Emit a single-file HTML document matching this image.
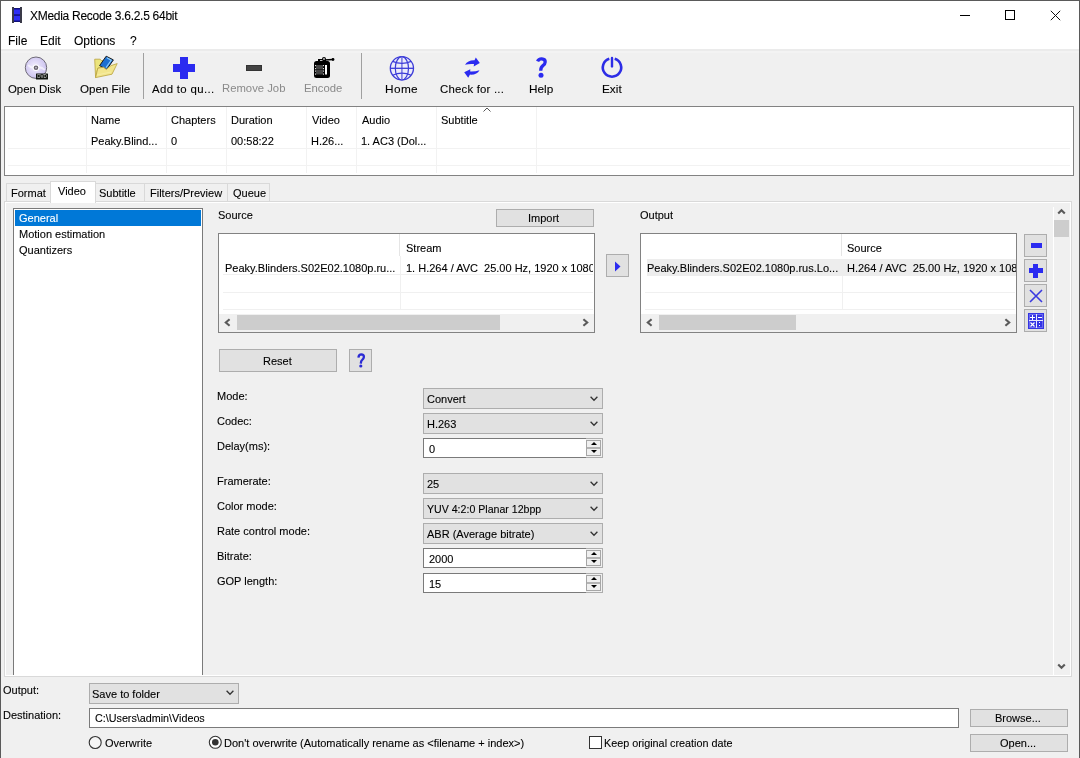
<!DOCTYPE html>
<html><head><meta charset="utf-8">
<style>
*{box-sizing:border-box}
html,body{margin:0;padding:0}
body{width:1080px;height:758px;overflow:hidden;position:relative;will-change:transform;background:#f0f0f0;font-family:"Liberation Sans",sans-serif;font-size:11px;color:#000}
.a{position:absolute}
.t{position:absolute;white-space:nowrap;line-height:13px;font-size:11px;-webkit-text-stroke:0.1px currentColor}
.btn{position:absolute;background:#e1e1e1;border:1px solid #adadad}
.cmb{position:absolute;background:#e1e1e1;border:1px solid #adadad}
.inp{position:absolute;background:#fff;border:1px solid #7a7a7a}
.g{color:#8d8d8d}
.hl{position:absolute;height:1px;background:#f0f0f0}
.vl{position:absolute;width:1px;background:#f0f0f0}
</style></head><body>

<!-- title + menu white area -->
<div class="a" style="left:0;top:0;width:1080px;height:49px;background:#fff"></div>
<!-- window borders -->
<div class="a" style="left:0;top:0;width:1080px;height:1px;background:#5a5a5a"></div>
<div class="a" style="left:0;top:0;width:1px;height:758px;background:#5a5a5a"></div>
<div class="a" style="left:1079px;top:0;width:1px;height:758px;background:#5a5a5a"></div>

<!-- app icon -->
<svg class="a" style="left:12px;top:7px" width="10" height="16" viewBox="0 0 10 16">
<rect x="0" y="0" width="2" height="16" fill="#3a3a48"/>
<rect x="8" y="0" width="2" height="16" fill="#3a3a48"/>
<rect x="2" y="1" width="6" height="14" fill="#2f2ff5"/>
<rect x="2" y="1" width="6" height="1.5" fill="#10107a"/>
<rect x="2" y="7.3" width="6" height="1.5" fill="#10107a"/>
<rect x="2" y="13.5" width="6" height="1.5" fill="#10107a"/>
</svg>
<div class="t" style="left:30px;top:10px;font-size:12px;letter-spacing:-0.28px">XMedia Recode 3.6.2.5 64bit</div>

<!-- window controls -->
<div class="a" style="left:960px;top:15px;width:10px;height:1px;background:#000"></div>
<div class="a" style="left:1005px;top:10px;width:10px;height:10px;border:1px solid #000"></div>
<svg class="a" style="left:1050px;top:10px" width="11" height="11" viewBox="0 0 11 11"><path d="M0.8 0.8L10.2 10.2M10.2 0.8L0.8 10.2" stroke="#111" stroke-width="1"/></svg>

<!-- menu -->
<div class="t" style="left:8px;top:35px;font-size:12px">File</div>
<div class="t" style="left:40px;top:35px;font-size:12px">Edit</div>
<div class="t" style="left:74px;top:35px;font-size:12px">Options</div>
<div class="t" style="left:130px;top:35px;font-size:12px">?</div>


<!-- toolbar -->
<div class="a" style="left:1px;top:49px;width:1078px;height:2px;background:#ebebeb"></div>
<div class="a" style="left:1px;top:51px;width:1078px;height:2px;background:#f3f3f3"></div>
<!-- disc -->
<svg class="a" style="left:24px;top:55px" width="25" height="26" viewBox="0 0 25 26">
<defs><radialGradient id="dg" cx="0.45" cy="0.45" r="0.6"><stop offset="0" stop-color="#f4f0ff"/><stop offset="0.5" stop-color="#ddd6f6"/><stop offset="1" stop-color="#c9c0ee"/></radialGradient></defs>
<circle cx="12" cy="12.7" r="10.7" fill="url(#dg)" stroke="#6e6a76" stroke-width="1"/>
<path d="M4 10 Q8 14 12 12.7 Q17 11 21 15" stroke="#fff" stroke-width="2" fill="none" opacity="0.6"/>
<circle cx="12" cy="12.7" r="3.2" fill="#fff"/>
<circle cx="12" cy="12.7" r="2.3" fill="#6a6470"/><circle cx="12" cy="12.7" r="0.9" fill="#c8c4d0"/>
<rect x="12" y="18.6" width="12" height="6" rx="0.5" fill="#101510"/>
<text x="13.3" y="23.4" font-family="Liberation Sans" font-size="5" fill="#dcdcdc" textLength="9.5" lengthAdjust="spacingAndGlyphs">DVD</text>
</svg>
<!-- folder -->
<svg class="a" style="left:94px;top:55px" width="24" height="24" viewBox="0 0 24 24">
<path d="M0.7 4.2 L6.2 4.2 L7.4 5.6 L13 5.6 L13 12 L3.8 13.2 L1.6 22.6 Z" fill="#ebe47c" stroke="#b9a23e" stroke-width="0.8"/>
<path d="M5.6 10.6 L12.2 1.2 L19.4 4.9 L12.6 14.6 Z" fill="#1c6fd0" stroke="#1a1a1a" stroke-width="1"/>
<path d="M12.8 2.8 L17.2 5.2 L12 12.6" stroke="#8fd0fa" stroke-width="1.1" fill="none"/>
<path d="M1.6 22.6 L18 19.2 L23.2 8.6 L17 10.6 L12.2 14.4 L9.6 12.2 L3.8 13.2 Z" fill="#f2e58c" stroke="#b9a23e" stroke-width="0.8"/>
<path d="M3 20 L17 17" stroke="#f8f0b0" stroke-width="1" opacity="0.6"/>
</svg>
<div class="a" style="left:143px;top:53px;width:1px;height:46px;background:#a0a0a0"></div>
<!-- plus -->
<div class="a" style="left:180px;top:57px;width:8px;height:22px;background:#2b2bf0"></div>
<div class="a" style="left:173px;top:64px;width:22px;height:8px;background:#2b2bf0"></div>
<!-- minus -->
<div class="a" style="left:246px;top:65px;width:16px;height:6px;background:#434343;border:1px solid #333"></div>
<!-- encode -->
<svg class="a" style="left:313px;top:56px" width="22" height="23" viewBox="0 0 22 23">
<rect x="1" y="5" width="16" height="17" rx="2.5" fill="#000"/>
<rect x="5" y="3" width="8" height="4" fill="#000"/>
<path d="M11 4 L20 3.5" stroke="#000" stroke-width="1.6"/>
<circle cx="20" cy="3.5" r="1.4" fill="#000"/>
<circle cx="11" cy="3" r="2" fill="#000"/><circle cx="11" cy="3" r="0.9" fill="#ccc"/>
<rect x="7" y="4" width="2.5" height="1" fill="#bbb"/>
<rect x="3" y="9" width="7" height="4.5" fill="#444"/>
<rect x="3" y="14" width="7" height="4.5" fill="#444"/>
<rect x="2" y="9" width="1" height="1.2" fill="#ddd"/><rect x="2" y="12" width="1" height="1.2" fill="#ddd"/><rect x="2" y="14.5" width="1" height="1.2" fill="#ddd"/><rect x="2" y="17.5" width="1" height="1.2" fill="#ddd"/>
<rect x="10" y="9" width="1" height="1.2" fill="#ddd"/><rect x="10" y="12" width="1" height="1.2" fill="#ddd"/><rect x="10" y="14.5" width="1" height="1.2" fill="#ddd"/><rect x="10" y="17.5" width="1" height="1.2" fill="#ddd"/>
<rect x="12" y="9" width="2" height="9.5" fill="#fff"/>
</svg>
<div class="a" style="left:361px;top:53px;width:1px;height:46px;background:#a0a0a0"></div>
<!-- globe -->
<svg class="a" style="left:388px;top:54px" width="28" height="28" viewBox="0 0 28 28">
<g stroke="#3c3cd8" fill="none">
<circle cx="13.9" cy="14.3" r="11.6" fill="#ececfb" stroke-width="1.3"/>
<ellipse cx="13.9" cy="14.3" rx="6.6" ry="11.6" stroke-width="1.2"/>
<line x1="13.9" y1="2.7" x2="13.9" y2="25.9" stroke="#6e6ee0" stroke-width="1.4"/>
<line x1="2.3" y1="14.3" x2="25.5" y2="14.3" stroke-width="1.3"/>
<path d="M4.6 7.4 Q13.9 11.4 23.2 7.4" stroke-width="1.2"/>
<path d="M4.6 21.2 Q13.9 17.2 23.2 21.2" stroke-width="1.2"/>
</g>
</svg>
<!-- refresh -->
<svg class="a" style="left:460px;top:54px" width="24" height="26" viewBox="0 0 24 26">
<path d="M5 10.8 Q8 6 14.5 6.3 L15.8 3.6 L19.8 9.1 L13.7 12.4 L14 10 Q9 9.6 5 10.8 Z" fill="#2b2bf0"/>
<path d="M19.5 16.2 Q17 21 10 20.6 L8.2 23.8 L4.2 18.2 L10.3 15.2 L10.2 17.6 Q15.5 17.8 19.5 16.2 Z" fill="#2b2bf0"/>
</svg>
<!-- help ? -->
<svg class="a" style="left:530px;top:54px" width="22" height="26" viewBox="0 0 22 26">
<path d="M7.6 7.4 Q8.6 4.8 11.8 4.9 Q15.3 5.1 15.2 8 Q15.1 10.2 12.9 11.7 Q10.8 13.2 10.7 16.8" stroke="#2b2bf0" stroke-width="3.3" fill="none"/>
<circle cx="11" cy="21.2" r="2.5" fill="#2b2bf0"/>
</svg>
<!-- power -->
<svg class="a" style="left:600px;top:55px" width="24" height="25" viewBox="0 0 24 25">
<path d="M9.3 3.7 A9.2 9.2 0 1 0 14.7 3.7" stroke="#2d2de6" stroke-width="2.6" fill="none"/>
<line x1="12" y1="3" x2="12" y2="11.4" stroke="#2d2de6" stroke-width="2.4" stroke-linecap="round"/>
</svg>
<div class="t" style="left:8px;top:83px;font-size:11.4px">Open Disk</div>
<div class="t" style="left:80px;top:82px;font-size:11.6px">Open File</div>
<div class="t" style="left:152px;top:83px;font-size:11.4px;letter-spacing:0.35px">Add to qu...</div>
<div class="t g" style="left:222px;top:82px;font-size:11.3px;color:#8a8a8a;-webkit-text-stroke:0">Remove Job</div>
<div class="t g" style="left:304px;top:82px;font-size:11.3px;color:#8a8a8a;-webkit-text-stroke:0">Encode</div>
<div class="t" style="left:385px;top:83px;font-size:11.8px;letter-spacing:0.4px">Home</div>
<div class="t" style="left:440px;top:83px;font-size:11.4px;letter-spacing:0.2px">Check for ...</div>
<div class="t" style="left:529px;top:83px;font-size:11.8px">Help</div>
<div class="t" style="left:602px;top:83px;font-size:11.8px">Exit</div>


<!-- file list -->
<div class="a" style="left:4px;top:106px;width:1070px;height:70px;background:#fff;border:1px solid #828282"></div>
<div class="vl" style="left:86px;top:107px;height:66px;background:#f2f2f2"></div>
<div class="vl" style="left:166px;top:107px;height:66px;background:#f2f2f2"></div>
<div class="vl" style="left:226px;top:107px;height:66px;background:#f2f2f2"></div>
<div class="vl" style="left:306px;top:107px;height:66px;background:#f2f2f2"></div>
<div class="vl" style="left:356px;top:107px;height:66px;background:#f2f2f2"></div>
<div class="vl" style="left:436px;top:107px;height:66px;background:#f2f2f2"></div>
<div class="vl" style="left:536px;top:107px;height:66px;background:#f2f2f2"></div>
<div class="hl" style="left:8px;top:148px;width:1062px;background:#f2f2f2"></div>
<div class="hl" style="left:8px;top:165px;width:1062px;background:#f2f2f2"></div>
<div class="t" style="left:91px;top:114px;font-size:11px">Name</div>
<div class="t" style="left:171px;top:114px;font-size:11px">Chapters</div>
<div class="t" style="left:231px;top:114px;font-size:11px">Duration</div>
<div class="t" style="left:312px;top:114px;font-size:11px">Video</div>
<div class="t" style="left:362px;top:114px;font-size:11px">Audio</div>
<div class="t" style="left:441px;top:114px;font-size:11px">Subtitle</div>
<svg class="a" style="left:483px;top:107px" width="8" height="6" viewBox="0 0 8 6"><path d="M0.5 4.5 L4 1 L7.5 4.5" stroke="#555" stroke-width="1" fill="none"/></svg>
<div class="t" style="left:91px;top:135px;font-size:11px">Peaky.Blind...</div>
<div class="t" style="left:171px;top:135px;font-size:11px">0</div>
<div class="t" style="left:231px;top:135px;font-size:11px">00:58:22</div>
<div class="t" style="left:311px;top:135px;font-size:11px">H.26...</div>
<div class="t" style="left:361px;top:135px;font-size:11px">1. AC3 (Dol...</div>

<!-- tabs -->
<div class="a" style="left:6px;top:183px;width:45px;height:19px;background:#f0f0f0;border:1px solid #d9d9d9;border-bottom:none"></div>
<div class="a" style="left:95px;top:183px;width:50px;height:19px;background:#f0f0f0;border:1px solid #d9d9d9;border-bottom:none"></div>
<div class="a" style="left:144px;top:183px;width:84px;height:19px;background:#f0f0f0;border:1px solid #d9d9d9;border-bottom:none"></div>
<div class="a" style="left:227px;top:183px;width:43px;height:19px;background:#f0f0f0;border:1px solid #d9d9d9;border-bottom:none"></div>
<!-- panel -->
<div class="a" style="left:4px;top:201px;width:1068px;height:476px;background:#f0f0f0;border:1px solid #d9d9d9;box-shadow:inset 0 0 0 1px #fff"></div>
<div class="a" style="left:50px;top:181px;width:46px;height:22px;background:#fff;border:1px solid #d9d9d9;border-bottom:none"></div>
<div class="t" style="left:11px;top:187px;font-size:11px">Format</div>
<div class="t" style="left:58px;top:185px;font-size:11px">Video</div>
<div class="t" style="left:99px;top:187px;font-size:11px">Subtitle</div>
<div class="t" style="left:150px;top:187px;font-size:11px">Filters/Preview</div>
<div class="t" style="left:233px;top:187px;font-size:11px">Queue</div>


<!-- left listbox -->
<div class="a" style="left:13px;top:208px;width:190px;height:467px;background:#fff;border:1px solid #7a7a7a;border-bottom:none"></div>
<div class="a" style="left:15px;top:210px;width:186px;height:16px;background:#0078d7"></div>
<div class="t" style="left:19px;top:212px;color:#fff">General</div>
<div class="t" style="left:19px;top:228px">Motion estimation</div>
<div class="t" style="left:19px;top:244px">Quantizers</div>

<!-- source -->
<div class="t" style="left:218px;top:209px">Source</div>
<div class="btn" style="left:496px;top:209px;width:98px;height:18px"></div>
<div class="t" style="left:528px;top:212px">Import</div>
<div class="a" style="left:218px;top:233px;width:377px;height:100px;background:#fff;border:1px solid #828282"></div>
<div class="vl" style="left:399px;top:234px;height:22px;background:#e5e5e5"></div>
<div class="vl" style="left:400px;top:256px;height:54px"></div>
<div class="hl" style="left:223px;top:274px;width:370px"></div>
<div class="hl" style="left:223px;top:292px;width:370px"></div>
<div class="hl" style="left:223px;top:309px;width:370px"></div>
<div class="t" style="left:406px;top:242px">Stream</div>
<div class="t" style="left:225px;top:262px">Peaky.Blinders.S02E02.1080p.ru...</div>
<div class="a" style="left:400px;top:258px;width:193px;height:17px;overflow:hidden"><div class="t" style="left:6px;top:4px">1. H.264 / AVC&nbsp; 25.00 Hz, 1920 x 1080</div></div>
<div class="a" style="left:219px;top:314px;width:375px;height:18px;background:#f0f0f0"></div>
<div class="a" style="left:237px;top:315px;width:263px;height:15px;background:#cdcdcd"></div>
<svg class="a" style="left:224px;top:318px" width="8" height="9" viewBox="0 0 8 9"><path d="M5.6 1.3 L1.8 4.5 L5.6 7.7" stroke="#5a5a5a" stroke-width="2.1" fill="none"/></svg>
<svg class="a" style="left:581px;top:318px" width="8" height="9" viewBox="0 0 8 9"><path d="M2.4 1.3 L6.2 4.5 L2.4 7.7" stroke="#5a5a5a" stroke-width="2.1" fill="none"/></svg>

<!-- arrow button -->
<div class="btn" style="left:606px;top:254px;width:23px;height:23px"></div>
<svg class="a" style="left:614px;top:261px" width="8" height="11" viewBox="0 0 8 11"><path d="M1 0.5 L6.5 5.5 L1 10.5 Z" fill="#2b2bf0"/></svg>

<!-- output -->
<div class="t" style="left:640px;top:209px">Output</div>
<div class="a" style="left:640px;top:233px;width:377px;height:100px;background:#fff;border:1px solid #828282"></div>
<div class="a" style="left:647px;top:259px;width:369px;height:17px;background:#ededed"></div>
<div class="vl" style="left:841px;top:234px;height:22px;background:#e5e5e5"></div>
<div class="vl" style="left:842px;top:276px;height:34px"></div>
<div class="hl" style="left:645px;top:292px;width:370px"></div>
<div class="hl" style="left:645px;top:309px;width:370px"></div>
<div class="t" style="left:847px;top:242px">Source</div>
<div class="t" style="left:647px;top:262px">Peaky.Blinders.S02E02.1080p.rus.Lo...</div>
<div class="a" style="left:842px;top:259px;width:174px;height:17px;overflow:hidden"><div class="t" style="left:5px;top:3px">H.264 / AVC&nbsp; 25.00 Hz, 1920 x 1080</div></div>
<div class="a" style="left:641px;top:314px;width:375px;height:18px;background:#f0f0f0"></div>
<div class="a" style="left:659px;top:315px;width:137px;height:15px;background:#cdcdcd"></div>
<svg class="a" style="left:646px;top:318px" width="8" height="9" viewBox="0 0 8 9"><path d="M5.6 1.3 L1.8 4.5 L5.6 7.7" stroke="#5a5a5a" stroke-width="2.1" fill="none"/></svg>
<svg class="a" style="left:1003px;top:318px" width="8" height="9" viewBox="0 0 8 9"><path d="M2.4 1.3 L6.2 4.5 L2.4 7.7" stroke="#5a5a5a" stroke-width="2.1" fill="none"/></svg>

<!-- side buttons -->
<div class="btn" style="left:1024px;top:234px;width:23px;height:23px"></div>
<div class="a" style="left:1031px;top:243px;width:11px;height:5px;background:#2b2bf0"></div>
<div class="btn" style="left:1024px;top:259px;width:23px;height:23px"></div>
<div class="a" style="left:1033px;top:264px;width:5px;height:14px;background:#2b2bf0"></div>
<div class="a" style="left:1029px;top:268px;width:14px;height:5px;background:#2b2bf0"></div>
<div class="btn" style="left:1024px;top:284px;width:23px;height:23px"></div>
<svg class="a" style="left:1029px;top:289px" width="14" height="14" viewBox="0 0 14 14"><path d="M1 1 L13 13 M13 1 L1 13" stroke="#3a3ae0" stroke-width="1.6"/></svg>
<div class="btn" style="left:1024px;top:309px;width:23px;height:23px"></div>
<svg class="a" style="left:1028px;top:313px" width="16" height="16" viewBox="0 0 16 16" shape-rendering="crispEdges">
<rect x="0" y="0" width="16" height="16" fill="#3434e4"/>
<rect x="1.5" y="1.5" width="13" height="13" fill="none" stroke="#6a6aee" stroke-width="1"/>
<rect x="8" y="1" width="1" height="14" fill="#e8e8ff"/>
<rect x="1" y="7" width="14" height="1" fill="#e8e8ff"/>
<rect x="2" y="4" width="5" height="1" fill="#fff"/><rect x="4" y="2" width="1" height="5" fill="#fff"/>
<rect x="10" y="4" width="4" height="1" fill="#fff"/>
<path d="M2.5 9.5 L6.5 13.5 M6.5 9.5 L2.5 13.5" stroke="#fff" stroke-width="1.2" shape-rendering="auto"/>
<rect x="11" y="9" width="1" height="1" fill="#fff"/><rect x="11" y="12" width="1" height="1" fill="#fff"/>
</svg>

<!-- right vertical scrollbar -->
<div class="a" style="left:1053px;top:207px;width:1px;height:468px;background:#fff"></div>
<div class="a" style="left:1054px;top:207px;width:16px;height:468px;background:#f0f0f0"></div>
<div class="a" style="left:1054px;top:220px;width:15px;height:17px;background:#cdcdcd"></div>
<svg class="a" style="left:1057px;top:208px" width="9" height="7" viewBox="0 0 9 7"><path d="M1.2 5.6 L4.5 2.2 L7.8 5.6" stroke="#5a5a5a" stroke-width="2.1" fill="none"/></svg>
<svg class="a" style="left:1057px;top:663px" width="9" height="7" viewBox="0 0 9 7"><path d="M1.2 1.4 L4.5 4.8 L7.8 1.4" stroke="#5a5a5a" stroke-width="2.1" fill="none"/></svg>

<!-- reset / help -->
<div class="btn" style="left:219px;top:349px;width:118px;height:23px"></div>
<div class="t" style="left:263px;top:355px">Reset</div>
<div class="btn" style="left:349px;top:349px;width:23px;height:23px"></div>
<svg class="a" style="left:356px;top:353px" width="10" height="15" viewBox="0 0 10 15"><path d="M2.4 4.6 Q2.8 1.4 5.3 1.4 Q7.9 1.5 7.9 3.9 Q7.8 5.6 6.2 6.9 Q4.9 7.9 4.8 10.6" stroke="#2a2ad4" stroke-width="2.3" fill="none"/><circle cx="4.8" cy="13" r="1.6" fill="#2a2ad4"/></svg>


<!-- form -->
<div class="t" style="left:217px;top:390px">Mode:</div>
<div class="t" style="left:217px;top:415px">Codec:</div>
<div class="t" style="left:217px;top:440px">Delay(ms):</div>
<div class="t" style="left:217px;top:475px">Framerate:</div>
<div class="t" style="left:217px;top:500px">Color mode:</div>
<div class="t" style="left:217px;top:525px">Rate control mode:</div>
<div class="t" style="left:217px;top:550px">Bitrate:</div>
<div class="t" style="left:217px;top:575px">GOP length:</div>
<div class="cmb" style="left:423px;top:388px;width:180px;height:21px"></div>
<div class="t" style="left:427px;top:393px">Convert</div>
<svg class="a" style="left:590px;top:396px" width="8" height="6" viewBox="0 0 8 6"><path d="M0.6 0.8 L4 4.3 L7.4 0.8" stroke="#333" stroke-width="1.3" fill="none"/></svg>
<div class="cmb" style="left:423px;top:413px;width:180px;height:21px"></div>
<div class="t" style="left:427px;top:418px">H.263</div>
<svg class="a" style="left:590px;top:421px" width="8" height="6" viewBox="0 0 8 6"><path d="M0.6 0.8 L4 4.3 L7.4 0.8" stroke="#333" stroke-width="1.3" fill="none"/></svg>
<div class="a" style="left:423px;top:438px;width:180px;height:20px;background:#f0f0f0;border:1px solid #adadad"></div>
<div class="a" style="left:423px;top:438px;width:163px;height:20px;background:#fff;border:1px solid #7a7a7a;border-right:none"></div>
<div class="t" style="left:429px;top:443px">0</div>
<div class="a" style="left:586px;top:440px;width:15px;height:16px;background:#f0f0f0;border:1px solid #a6a6a6"></div>
<div class="a" style="left:587px;top:447px;width:13px;height:2px;background:#b4b4b4"></div>
<svg class="a" style="left:591px;top:442px" width="6" height="3" viewBox="0 0 6 3"><path d="M0 3 L3 0 L6 3 Z" fill="#000"/></svg>
<svg class="a" style="left:591px;top:450px" width="6" height="3" viewBox="0 0 6 3"><path d="M0 0 L3 3 L6 0 Z" fill="#000"/></svg>
<div class="cmb" style="left:423px;top:473px;width:180px;height:21px"></div>
<div class="t" style="left:427px;top:478px">25</div>
<svg class="a" style="left:590px;top:481px" width="8" height="6" viewBox="0 0 8 6"><path d="M0.6 0.8 L4 4.3 L7.4 0.8" stroke="#333" stroke-width="1.3" fill="none"/></svg>
<div class="cmb" style="left:423px;top:498px;width:180px;height:21px"></div>
<div class="t" style="left:427px;top:503px;font-size:10.6px">YUV 4:2:0 Planar 12bpp</div>
<svg class="a" style="left:590px;top:506px" width="8" height="6" viewBox="0 0 8 6"><path d="M0.6 0.8 L4 4.3 L7.4 0.8" stroke="#333" stroke-width="1.3" fill="none"/></svg>
<div class="cmb" style="left:423px;top:523px;width:180px;height:21px"></div>
<div class="t" style="left:427px;top:528px">ABR (Average bitrate)</div>
<svg class="a" style="left:590px;top:531px" width="8" height="6" viewBox="0 0 8 6"><path d="M0.6 0.8 L4 4.3 L7.4 0.8" stroke="#333" stroke-width="1.3" fill="none"/></svg>
<div class="a" style="left:423px;top:548px;width:180px;height:20px;background:#f0f0f0;border:1px solid #adadad"></div>
<div class="a" style="left:423px;top:548px;width:163px;height:20px;background:#fff;border:1px solid #7a7a7a;border-right:none"></div>
<div class="t" style="left:429px;top:553px">2000</div>
<div class="a" style="left:586px;top:550px;width:15px;height:16px;background:#f0f0f0;border:1px solid #a6a6a6"></div>
<div class="a" style="left:587px;top:557px;width:13px;height:2px;background:#b4b4b4"></div>
<svg class="a" style="left:591px;top:552px" width="6" height="3" viewBox="0 0 6 3"><path d="M0 3 L3 0 L6 3 Z" fill="#000"/></svg>
<svg class="a" style="left:591px;top:560px" width="6" height="3" viewBox="0 0 6 3"><path d="M0 0 L3 3 L6 0 Z" fill="#000"/></svg>
<div class="a" style="left:423px;top:573px;width:180px;height:20px;background:#f0f0f0;border:1px solid #adadad"></div>
<div class="a" style="left:423px;top:573px;width:163px;height:20px;background:#fff;border:1px solid #7a7a7a;border-right:none"></div>
<div class="t" style="left:429px;top:578px">15</div>
<div class="a" style="left:586px;top:575px;width:15px;height:16px;background:#f0f0f0;border:1px solid #a6a6a6"></div>
<div class="a" style="left:587px;top:582px;width:13px;height:2px;background:#b4b4b4"></div>
<svg class="a" style="left:591px;top:577px" width="6" height="3" viewBox="0 0 6 3"><path d="M0 3 L3 0 L6 3 Z" fill="#000"/></svg>
<svg class="a" style="left:591px;top:585px" width="6" height="3" viewBox="0 0 6 3"><path d="M0 0 L3 3 L6 0 Z" fill="#000"/></svg>

<!-- bottom -->
<div class="t" style="left:3px;top:684px">Output:</div>
<div class="t" style="left:3px;top:709px">Destination:</div>
<div class="cmb" style="left:89px;top:683px;width:150px;height:21px"></div>
<div class="t" style="left:92px;top:688px">Save to folder</div>
<svg class="a" style="left:226px;top:690px" width="8" height="6" viewBox="0 0 8 6"><path d="M0.6 0.8 L4 4.3 L7.4 0.8" stroke="#333" stroke-width="1.3" fill="none"/></svg>
<div class="inp" style="left:89px;top:708px;width:870px;height:20px"></div>
<div class="t" style="left:95px;top:712px;font-size:10.75px">C:\Users\admin\Videos</div>
<svg class="a" style="left:88px;top:735px" width="15" height="15" viewBox="0 0 15 15"><circle cx="7.2" cy="7.5" r="6" fill="#f5f5f5" stroke="#333" stroke-width="1.1"/></svg>
<div class="t" style="left:105px;top:737px">Overwrite</div>
<svg class="a" style="left:208px;top:735px" width="15" height="15" viewBox="0 0 15 15"><circle cx="7.3" cy="7.3" r="6" fill="#fff" stroke="#333" stroke-width="1.1"/><circle cx="7.3" cy="7.3" r="3.3" fill="#333"/></svg>
<div class="t" style="left:224px;top:737px">Don't overwrite (Automatically rename as &lt;filename + index&gt;)</div>
<div class="a" style="left:589px;top:736px;width:13px;height:13px;background:#fff;border:1px solid #333"></div>
<div class="t" style="left:604px;top:737px;font-size:10.8px">Keep original creation date</div>
<div class="btn" style="left:970px;top:709px;width:98px;height:18px"></div>
<div class="t" style="left:995px;top:712px">Browse...</div>
<div class="btn" style="left:970px;top:734px;width:98px;height:18px"></div>
<div class="t" style="left:1000px;top:737px">Open...</div>

</body></html>
